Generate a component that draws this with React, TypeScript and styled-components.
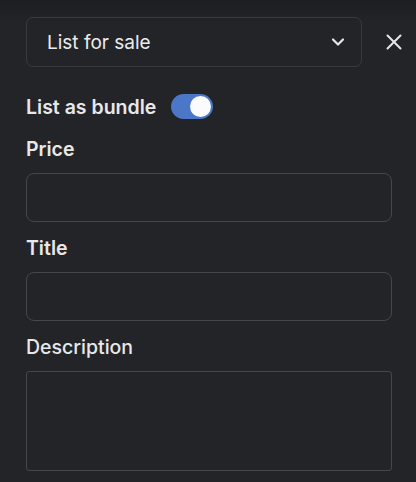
import React, {useState} from "react";
import styled, {createGlobalStyle} from "styled-components";

const GlobalStyle = createGlobalStyle`
  html, body {
    margin: 0;
    padding: 0;
    background: #232428;
  }
  body {
    font-family: Inter, "Open Sans", sans-serif;
    color: #e8e8ea;
  }
`;

const Page = styled.div`
  min-height: 482px;
  box-sizing: border-box;
  padding: 17px 10px 0 26px;
  background: linear-gradient(to bottom, #1d1e21 0px, #232428 22px);
`;

const Header = styled.div`
  display: flex;
  align-items: center;
`;

const SelectBox = styled.div`
  flex: 0 0 336px;
  height: 50px;
  box-sizing: border-box;
  border: 1px solid #393a3e;
  border-radius: 7px;
  display: flex;
  align-items: center;
  justify-content: space-between;
  padding: 0 16px 0 20px;
  font-size: 19px;
  font-weight: 400;
  color: #ececee;
`;

const CloseButton = styled.button`
  margin-left: 20px;
  width: 24px;
  height: 24px;
  padding: 0;
  border: none;
  background: none;
  color: #e6e6e8;
  display: flex;
  align-items: center;
  justify-content: center;
`;

const BundleRow = styled.div`
  display: flex;
  align-items: center;
  gap: 15px;
  margin-top: 27px;
  height: 25px;
`;

const BundleLabel = styled.span`
  font-size: 19.5px;
  font-weight: 600;
  line-height: 24px;
`;

const Track = styled.button<{ $on: boolean }>`
  width: 42px;
  height: 25px;
  border-radius: 13px;
  border: none;
  padding: 0 2px;
  background: ${p => (p.$on ? "#4a77c8" : "#55565b")};
  display: flex;
  align-items: center;
  justify-content: ${p => (p.$on ? "flex-end" : "flex-start")};
  cursor: pointer;
`;

const Knob = styled.span`
  width: 21px;
  height: 21px;
  border-radius: 50%;
  background: #fbfbfd;
`;

const Fields = styled.div`
  display: flex;
  flex-direction: column;
  gap: 14px;
  margin-top: 18px;
  width: 366px;
`;

const Field = styled.label`
  display: flex;
  flex-direction: column;
`;

const FieldLabel = styled.span<{ $weight?: number }>`
  font-size: 19.5px;
  line-height: 24px;
  font-weight: ${p => p.$weight ?? 600};
  margin-bottom: 12px;
`;

const Input = styled.input`
  height: 49px;
  box-sizing: border-box;
  border: 1px solid #46474b;
  border-radius: 8px;
  background: transparent;
  color: #e8e8ea;
  font: inherit;
  font-size: 17px;
  padding: 0 14px;
  outline: none;
`;

const TextArea = styled.textarea`
  height: 100px;
  box-sizing: border-box;
  border: 1px solid #46474b;
  border-radius: 3px;
  background: transparent;
  color: #e8e8ea;
  font: inherit;
  font-size: 17px;
  padding: 10px 14px;
  resize: none;
  outline: none;
`;

const App = () => {
    const [bundle, setBundle] = useState(true);

    return (
        <>
            <GlobalStyle/>
            <Page>
                <Header>
                    <SelectBox>
                        <span>List for sale</span>
                        <svg width="14" height="10" viewBox="0 0 14 10" fill="none">
                            <path d="M2 2.5 L7 7.5 L12 2.5" stroke="#e6e6e8" strokeWidth="2.2"
                                  strokeLinecap="round" strokeLinejoin="round"/>
                        </svg>
                    </SelectBox>
                    <CloseButton aria-label="Close">
                        <svg width="18" height="18" viewBox="0 0 18 18" fill="none">
                            <path d="M2.5 2.5 L15.5 15.5 M15.5 2.5 L2.5 15.5" stroke="#e6e6e8"
                                  strokeWidth="2" strokeLinecap="round"/>
                        </svg>
                    </CloseButton>
                </Header>

                <BundleRow>
                    <BundleLabel>List as bundle</BundleLabel>
                    <Track $on={bundle} onClick={() => setBundle(!bundle)} aria-label="List as bundle">
                        <Knob/>
                    </Track>
                </BundleRow>

                <Fields>
                    <Field>
                        <FieldLabel>Price</FieldLabel>
                        <Input/>
                    </Field>
                    <Field>
                        <FieldLabel>Title</FieldLabel>
                        <Input/>
                    </Field>
                    <Field>
                        <FieldLabel $weight={500}>Description</FieldLabel>
                        <TextArea/>
                    </Field>
                </Fields>
            </Page>
        </>
    )
}

export default App
